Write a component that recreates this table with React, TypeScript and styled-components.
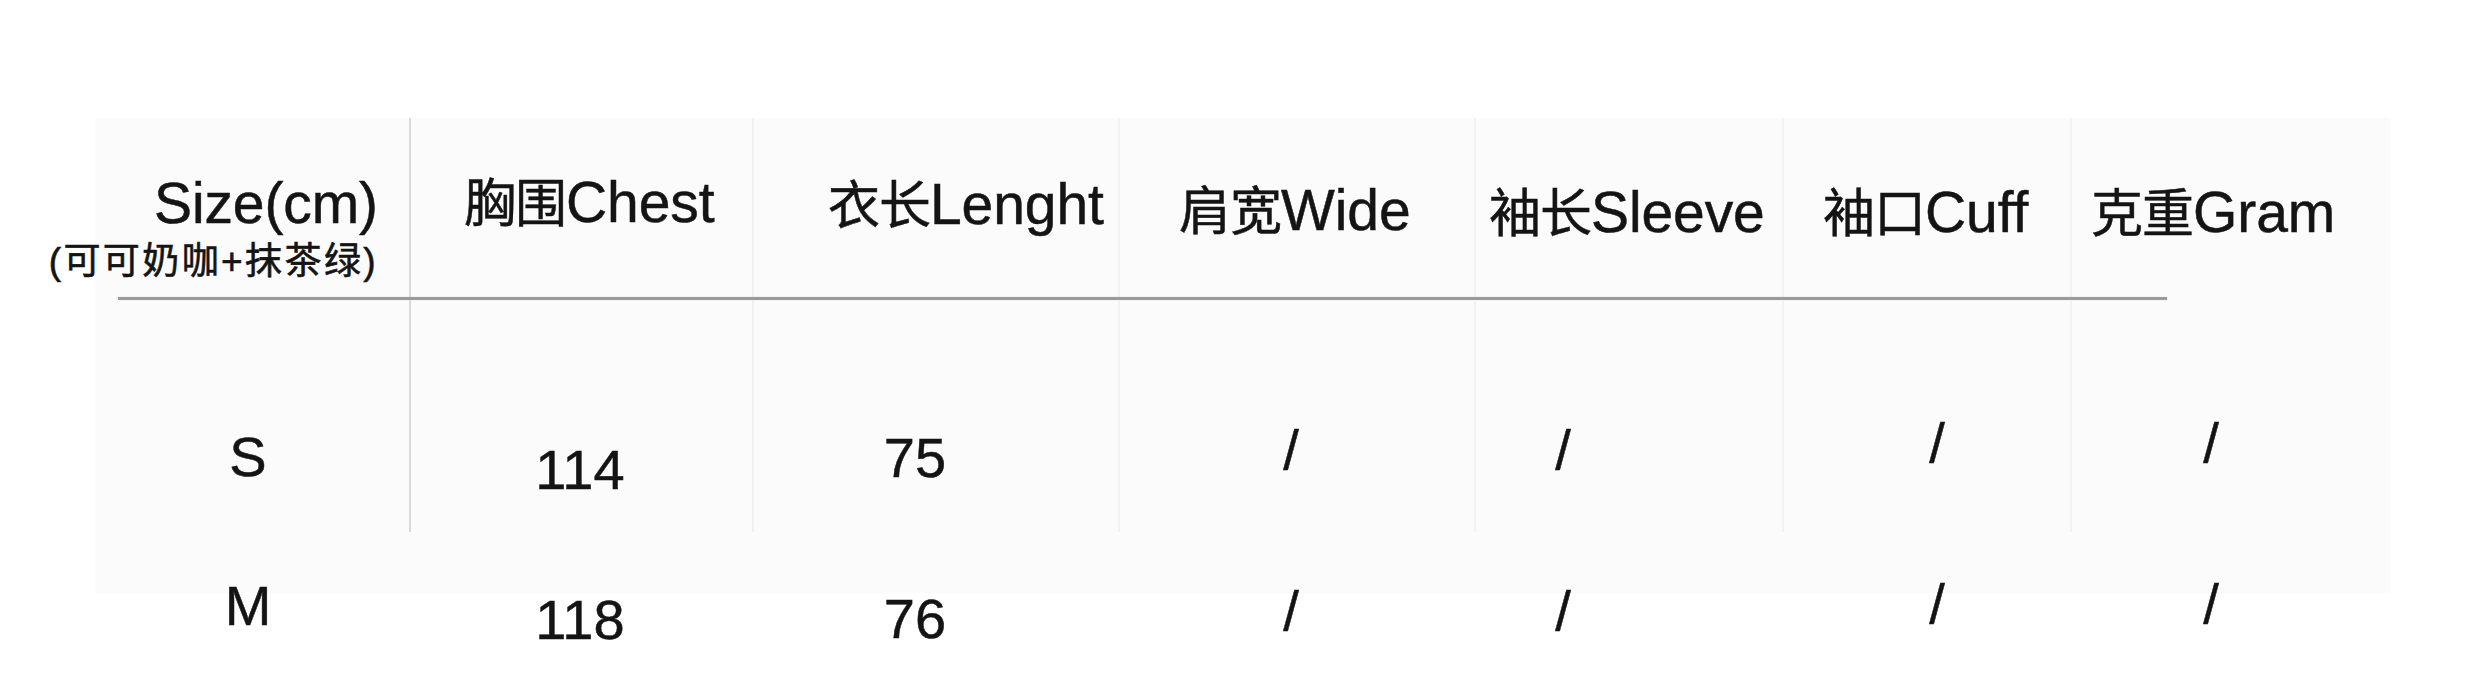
import React from "react";
import styled, { createGlobalStyle } from "styled-components";

interface IColumn {
    zh: string;
    en: string;
    width: number;
    headPad: number;
    headY: number;
    center: number;
    line: string;
}

interface IRow {
    values: string[];
    dy: number[];
}

const columns: IColumn[] = [
    { zh: "", en: "Size(cm)", width: 316, headPad: 31, headY: 203, center: 153, line: "#dadada" },
    { zh: "胸围", en: "Chest", width: 343, headPad: 53, headY: 200, center: 169, line: "#f0f0f0" },
    { zh: "衣长", en: "Lenght", width: 366, headPad: 74, headY: 202, center: 161, line: "#f2f2f2" },
    { zh: "肩宽", en: "Wide", width: 356, headPad: 59, headY: 208, center: 171, line: "#f2f2f2" },
    { zh: "袖长", en: "Sleeve", width: 308, headPad: 13, headY: 210, center: 87, line: "#f2f2f2" },
    { zh: "袖口", en: "Cuff", width: 288, headPad: 39, headY: 210, center: 153, line: "#f2f2f2" },
    { zh: "克重", en: "Gram", width: 318, headPad: 19, headY: 210, center: 139, line: "transparent" },
]

const rows: IRow[] = [
    { values: ["S", "114", "75", "/", "/", "/", "/"], dy: [0, 13, 1, -7, -7, -14, -14] },
    { values: ["M", "118", "76", "/", "/", "/", "/"], dy: [0, 14, 13, 5, 5, -2, -2] },
]

const TABLE_TOP = 118;

const GlobalStyle = createGlobalStyle`
    html, body {
        margin: 0;
        padding: 0;
        background: #fff;
    }
    body {
        font-family: "Liberation Sans", "Noto Sans CJK SC", sans-serif;
        color: #141414;
    }
`

const Page = styled.div`
    width: 2480px;
    height: 692px;
    overflow: hidden;
    padding: ${TABLE_TOP}px 0 0 95px;
    box-sizing: border-box;
`

const Table = styled.div`
    width: 2295px;
    display: flex;
    flex-direction: column;
    background: linear-gradient(#fbfbfb, #fbfbfb) top left / 100% 475px no-repeat;
`

const Row = styled.div`
    display: flex;
`

const HeadCell: any = styled.div`
    flex: 0 0 ${(props: any) => props.width}px;
    min-width: 0;
    height: 179px;
    box-sizing: border-box;
    border-right: 2px solid ${(props: any) => props.line};
    padding-top: ${(props: any) => props.headY - TABLE_TOP - 29}px;
    padding-left: ${(props: any) => props.headPad}px;
    white-space: nowrap;
`

const SizeHeadCell: any = styled(HeadCell)`
    display: flex;
    flex-direction: column;
    align-items: flex-end;
    padding-left: 0;
    padding-right: ${(props: any) => props.headPad}px;
`

const Label = styled.div`
    font-size: 57px;
    line-height: 58px;
    letter-spacing: -0.1px;
    -webkit-text-stroke: 0.5px #141414;
`

const Zh = styled.span`
    font-family: "Noto Sans CJK SC", sans-serif;
    font-size: 52px;
    letter-spacing: -1px;
`

const Note = styled.div`
    margin-top: 10px;
    font-size: 37px;
    line-height: 40px;
    letter-spacing: 2.4px;
    white-space: nowrap;
    -webkit-text-stroke: 0.6px #141414;
`

const Rule = styled.div`
    margin-left: 23px;
    width: 2049px;
    height: 3px;
    background: #9a9a9a;
    box-shadow: 0 0 1px #bbb;
`

const BodyCell: any = styled.div`
    flex: 0 0 ${(props: any) => props.width}px;
    min-width: 0;
    height: ${(props: any) => props.height}px;
    box-sizing: border-box;
    display: flex;
    align-items: flex-start;
    border-right: 2px solid ${(props: any) => props.line};
    padding-top: ${(props: any) => props.top}px;
`

const Value: any = styled.div`
    flex: 0 0 ${(props: any) => props.center * 2}px;
    text-align: center;
    font-size: 56px;
    line-height: 56px;
    margin-top: ${(props: any) => props.dy}px;
    -webkit-text-stroke: 0.5px #141414;
`

export default function App() {
    return (
        <>
            <GlobalStyle />
            <Page>
                <Table>
                    <Row>
                        {columns.map((col, i) => i === 0 ? (
                            <SizeHeadCell key={i} width={col.width} headPad={col.headPad} headY={col.headY} line={col.line}>
                                <Label>{col.en}</Label>
                                <Note>(可可奶咖+抹茶绿)</Note>
                            </SizeHeadCell>
                        ) : (
                            <HeadCell key={i} width={col.width} headPad={col.headPad} headY={col.headY} line={col.line}>
                                <Label><Zh>{col.zh}</Zh>{col.en}</Label>
                            </HeadCell>
                        ))}
                    </Row>
                    <Rule />
                    {rows.map((row, r) => (
                        <Row key={r}>
                            {row.values.map((v, i) => (
                                <BodyCell
                                    key={i}
                                    width={columns[i].width}
                                    height={r === 0 ? 232 : 100}
                                    top={r === 0 ? 129 : 46}
                                    line={r === 0 ? columns[i].line : "transparent"}
                                >
                                    <Value center={columns[i].center} dy={row.dy[i]}>{v}</Value>
                                </BodyCell>
                            ))}
                        </Row>
                    ))}
                </Table>
            </Page>
        </>
    )
}
